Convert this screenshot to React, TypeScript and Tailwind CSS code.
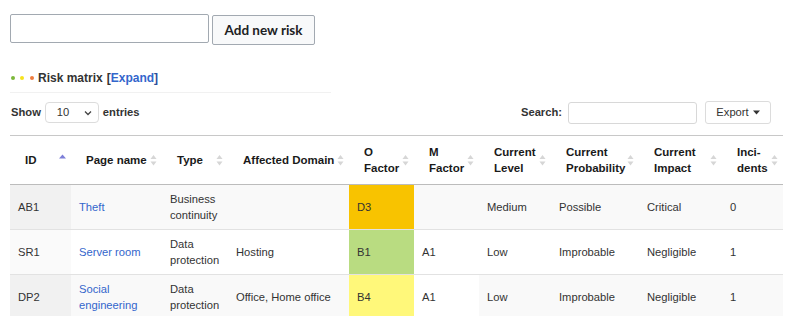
import React from "react";

const cols = [
  { label: "ID", w: 61, sort: "asc" },
  { label: "Page name", w: 91 },
  { label: "Type", w: 66 },
  { label: "Affected Domain", w: 121 },
  { label: "O Factor", w: 65 },
  { label: "M Factor", w: 65 },
  { label: "Current Level", w: 72 },
  { label: "Current Probability", w: 88 },
  { label: "Current Impact", w: 83 },
  { label: "Inci-dents", w: 61 },
];

type Row = {
  id: string;
  page: string;
  type: string;
  domain: string;
  o: string;
  oBg: string;
  m: string;
  level: string;
  prob: string;
  impact: string;
  inc: string;
  odd: boolean;
};

const rows: Row[] = [
  { id: "AB1", page: "Theft", type: "Business continuity", domain: "", o: "D3", oBg: "bg-[#f8c300]", m: "", level: "Medium", prob: "Possible", impact: "Critical", inc: "0", odd: true },
  { id: "SR1", page: "Server room", type: "Data protection", domain: "Hosting", o: "B1", oBg: "bg-[#b9dc81]", m: "A1", level: "Low", prob: "Improbable", impact: "Negligible", inc: "1", odd: false },
  { id: "DP2", page: "Social engineering", type: "Data protection", domain: "Office, Home office", o: "B4", oBg: "bg-[#fff87a]", m: "A1", level: "Low", prob: "Improbable", impact: "Negligible", inc: "1", odd: true },
];

function SortIcon({ active }: { active?: boolean }) {
  if (active) {
    return (
      <svg width="7" height="12" viewBox="0 0 7 12" className="absolute right-[5px] top-1/2 -translate-y-1/2">
        <polygon points="3.5,0.5 7,4.5 0,4.5" fill="#7d7fd8" />
      </svg>
    );
  }
  return (
    <svg width="7" height="12" viewBox="0 0 7 12" className="absolute right-[5px] top-1/2 -translate-y-[45%]">
      <polygon points="3.5,0.5 6.5,4.5 0.5,4.5" fill="#d6d6d6" />
      <polygon points="0.5,7 6.5,7 3.5,11" fill="#d6d6d6" />
    </svg>
  );
}

export default function App() {
  const td = "pl-[8px] pr-[6px] py-[6px] align-middle";
  return (
    <div className="w-[800px] h-[316px] overflow-hidden bg-white font-['Liberation_Sans',Arial,sans-serif] text-[#333]">
      <div className="px-[10px] pt-[14px]">
        <div className="flex items-start gap-[3px]">
          <input className="w-[199px] h-[29px] border border-[#a2a9b1] rounded-[2px] outline-none" />
          <button className="mt-[1px] h-[30px] w-[103px] border border-[#a2a9b1] rounded-[2px] bg-[#f8f9fa] font-['Lato',sans-serif] font-bold text-[13.5px] text-[#202122]">
            Add new risk
          </button>
        </div>

        <div className="mt-[25px] flex items-center h-[16px] font-bold text-[12px]">
          <span className="w-[4px] h-[4px] rounded-full bg-[#7cb83a] ml-[1px]" />
          <span className="w-[4px] h-[4px] rounded-full bg-[#f7e31d] ml-[5px]" />
          <span className="w-[4px] h-[4px] rounded-full bg-[#ef7d3f] ml-[6px]" />
          <span className="ml-[4px] text-[#333]">Risk matrix</span>
          <span className="ml-[4px] text-[#333]">[</span>
          <span className="text-[#3366cc]">Expand</span>
          <span className="text-[#2a4f9a]">]</span>
        </div>
        <div className="mt-[6px] h-px w-[321px] bg-[#f1f1f1]" />

        <div className="mt-[8px] flex items-center justify-between w-[773px] pr-[12px] text-[11.2px]">
          <div className="flex items-center font-bold">
            <span className="ml-[1px]">Show</span>
            <div className="ml-[4px] w-[54px] h-[21px] border border-[#dcdcdc] rounded-[4px] flex items-center justify-between pl-[11px] pr-[6px] font-normal">
              <span>10</span>
              <svg width="8" height="6" viewBox="0 0 8 6">
                <polyline points="1,1.5 4,4.5 7,1.5" fill="none" stroke="#444" strokeWidth="1.3" />
              </svg>
            </div>
            <span className="ml-[4px]">entries</span>
          </div>
          <div className="flex items-center">
            <span className="font-bold">Search:</span>
            <div className="ml-[6px] w-[129px] h-[22px] border border-[#d8d8d8] rounded-[3px]" />
            <div className="ml-[8px] w-[66px] h-[23px] border border-[#dcdcdc] rounded-[3px] flex items-center justify-center gap-[4px]">
              <span>Export</span>
              <svg width="7" height="5" viewBox="0 0 7 5">
                <polygon points="0,0.5 7,0.5 3.5,4.5" fill="#333" />
              </svg>
            </div>
          </div>
        </div>

        <table className="mt-[11px] table-fixed border-collapse w-[773px] text-[11.2px] leading-[16px]">
          <colgroup>
            {cols.map((c) => (
              <col key={c.label} style={{ width: c.w }} />
            ))}
          </colgroup>
          <thead>
            <tr className="border-t border-t-[#c8c8c8] border-b border-b-[#bcbcbc]">
              {cols.map((c) => (
                <th
                  key={c.label}
                  className="relative text-left align-middle font-bold text-[#1a1a1a] text-[11.5px] pl-[15px] pr-[12px] py-[8px] h-[48px]"
                >
                  {c.label === "Inci-dents" ? (
                    <span>
                      Inci-
                      <br />
                      dents
                    </span>
                  ) : (
                    c.label
                  )}
                  <SortIcon active={c.sort === "asc"} />
                </th>
              ))}
            </tr>
          </thead>
          <tbody>
            {rows.map((r, i) => {
              const base = r.odd ? "bg-[#f9f9f9]" : "bg-white";
              const idBg = r.odd ? "bg-[#f1f1f1]" : "bg-[#fafafa]";
              return (
                <tr key={r.id} className={i > 0 ? "border-t border-t-[#e2e2e2]" : ""}>
                  <td className={`${td} ${idBg} h-[45px]`}>{r.id}</td>
                  <td className={`${td} ${base}`}>
                    <span className="text-[#3366cc]">{r.page}</span>
                  </td>
                  <td className={`${td} ${base}`}>{r.type}</td>
                  <td className={`${td} ${base}`}>{r.domain}</td>
                  <td className={`${td} ${r.oBg}`}>{r.o}</td>
                  <td className={`${td} ${r.m ? "bg-white" : base}`}>{r.m}</td>
                  <td className={`${td} ${base}`}>{r.level}</td>
                  <td className={`${td} ${base}`}>{r.prob}</td>
                  <td className={`${td} ${base}`}>{r.impact}</td>
                  <td className={`${td} ${base}`}>{r.inc}</td>
                </tr>
              );
            })}
          </tbody>
        </table>
      </div>
    </div>
  );
}
